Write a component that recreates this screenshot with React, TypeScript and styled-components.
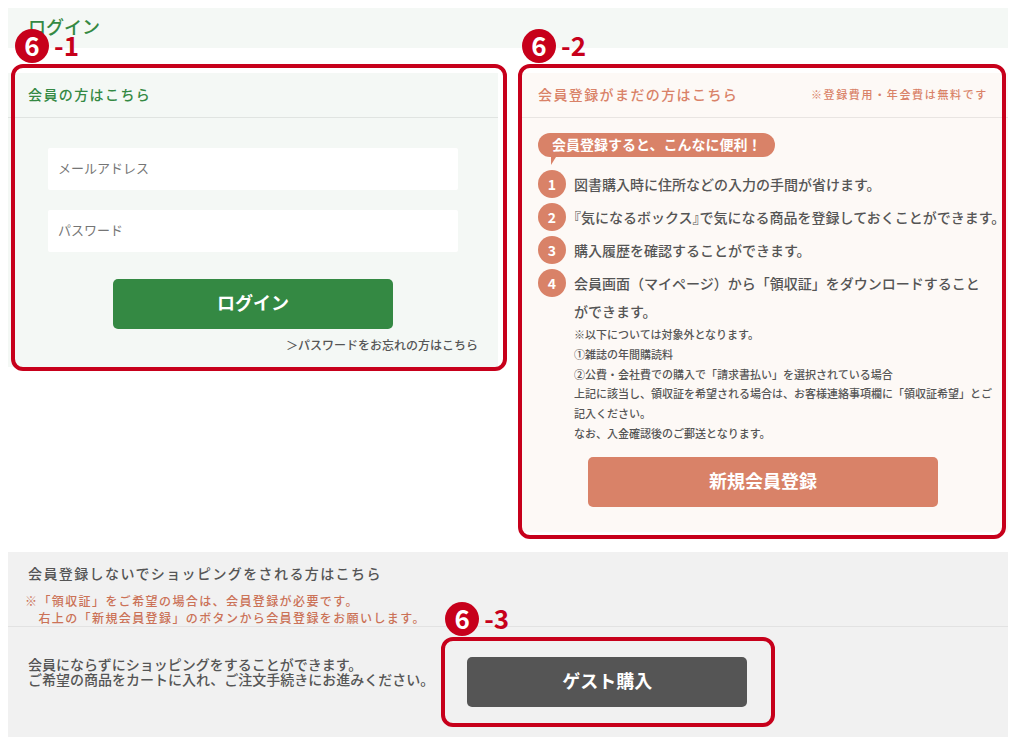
import React from "react";
import styled, { createGlobalStyle } from "styled-components";

const green = "#348943";
const orange = "#d98268";
const red = "#c7001b";
const ink = "#555555";

const GlobalStyle = createGlobalStyle`
  *, *::before, *::after { box-sizing: border-box; }
  body {
    margin: 0;
    background: #fff;
    color: ${ink};
    font-family: "Noto Sans CJK JP", sans-serif;
    font-size: 14px;
    font-weight: 500;
  }
  h1, h2, p, ol { margin: 0; padding: 0; }
`;

const Page = styled.main`
  padding: 8px 7px 6px 8px;
`;

const TitleBar = styled.header`
  padding: 0 20px 4px;
  background: #f4f8f5;
`;

const Title = styled.h1`
  color: ${green};
  font-size: 18px;
  font-weight: 500;
  line-height: 36px;
`;

const Columns = styled.div`
  display: grid;
  grid-template-columns: repeat(2, minmax(0, 1fr));
  align-items: start;
  gap: 20px;
  margin: 25px 0 20px;
`;

const Panel = styled.section<{ $bg: string }>`
  position: relative;
  background: ${(p) => p.$bg};
`;

const PanelHead = styled.div`
  display: flex;
  align-items: center;
  justify-content: space-between;
  padding: 0 20px 2px;
  border-bottom: 1px solid rgba(0, 0, 0, 0.08);
`;

const Heading = styled.h2<{ $color: string; $line: number }>`
  color: ${(p) => p.$color};
  font-size: 14px;
  font-weight: 500;
  letter-spacing: 0.1em;
  line-height: ${(p) => p.$line}px;
`;

const FreeNote = styled.p`
  color: ${orange};
  font-size: 11px;
  letter-spacing: 0.15em;
`;

const LoginForm = styled.form`
  display: flex;
  flex-direction: column;
  gap: 20px;
  padding: 30px 40px 0;
`;

const Field = styled.input`
  width: 100%;
  height: 42px;
  padding: 0 10px 3px;
  border: 0;
  border-radius: 2px;
  background: #fff;
  color: ${ink};
  font-family: inherit;
  font-size: 13px;

  &::placeholder {
    color: #757575;
    opacity: 1;
  }
`;

const Button = styled.button<{ $bg: string; $width: number }>`
  display: block;
  width: 100%;
  max-width: ${(p) => p.$width}px;
  height: 50px;
  margin: 0 auto;
  padding: 0 0 4px;
  border: 0;
  border-radius: 5px;
  background: ${(p) => p.$bg};
  color: #fff;
  font-family: inherit;
  font-size: 18px;
  font-weight: 700;
  line-height: 28px;
  cursor: pointer;
`;

const LoginAction = styled.div`
  padding-top: 7px;
`;

const Forgot = styled.p`
  padding: 6px 20px 12px;
  font-size: 12px;
  line-height: 20px;
  text-align: right;

  a {
    color: inherit;
    text-decoration: none;
  }
`;

const Benefits = styled.div`
  padding: 15px 20px 25px;
`;

const Balloon = styled.p`
  position: relative;
  width: fit-content;
  padding: 0 14px 2px;
  border-radius: 12px;
  background: ${orange};
  color: #fff;
  font-weight: 700;
  line-height: 22px;

  &::after {
    content: "";
    position: absolute;
    top: 100%;
    left: 13px;
    border-top: 8px solid ${orange};
    border-right: 5px solid transparent;
  }
`;

const BenefitList = styled.ol`
  display: flex;
  flex-direction: column;
  gap: 5px;
  && {
    margin: 13px -5px 13px 0;
  }
  list-style: none;
`;

const Benefit = styled.li`
  display: flex;
  align-items: flex-start;
  gap: 8px;
  line-height: 28px;
`;

const Num = styled.span`
  flex: none;
  width: 28px;
  height: 28px;
  border-radius: 50%;
  background: ${orange};
  color: #fff;
  font-weight: 700;
  text-align: center;
`;

const SingleLine = styled.p`
  font-feature-settings: "halt";
  white-space: nowrap;
`;

const Conditions = styled.p`
  font-size: 11px;
  line-height: 1.8;
`;

const GuestHead = styled.div`
  padding: 11px 17px 0;
  border-bottom: 1px solid rgba(0, 0, 0, 0.06);

  h2 {
    padding-left: 3px;
  }
`;

const GuestNote = styled.div`
  margin-top: 8px;
  color: #cb7257;
  letter-spacing: 0.1em;

  p {
    font-size: 12px;
    line-height: 17px;
  }
`;

const GuestBody = styled.div`
  display: flex;
  align-items: flex-start;
  gap: 33px;
  padding: 30px 20px;
`;

const GuestText = styled.p`
  line-height: 15px;
`;

const GuestAction = styled.div`
  position: relative;
  flex: 0 1 280px;
`;

const Frame = styled.div<{ $inset: string }>`
  position: absolute;
  inset: ${(p) => p.$inset};
  z-index: 1;
  border: 4px solid ${red};
  border-radius: 12px;
  pointer-events: none;
`;

const Tag = styled.div`
  position: absolute;
  bottom: 100%;
  left: 0;
  display: flex;
  align-items: flex-start;
  gap: 5px;
  padding-bottom: 5px;
  color: ${red};
  font-size: 26px;
  font-weight: 700;
  line-height: 32px;
`;

const TagDisc = styled.span`
  width: 34px;
  height: 34px;
  border-radius: 50%;
  background: ${red};
  color: #fff;
  text-align: center;
`;

function Callout({ inset, step }: { inset: string; step: number }) {
  return (
    <Frame $inset={inset}>
      <Tag>
        <TagDisc>6</TagDisc>
        <span>-{step}</span>
      </Tag>
    </Frame>
  );
}

export default function App() {
  return (
    <>
      <GlobalStyle />
      <Page>
        <TitleBar>
          <Title>ログイン</Title>
        </TitleBar>

        <Columns>
          <Panel $bg="#f4f8f5">
            <PanelHead>
              <Heading $color={green} $line={42}>会員の方はこちら</Heading>
            </PanelHead>
            <LoginForm onSubmit={(e) => e.preventDefault()}>
              <Field type="email" placeholder="メールアドレス" aria-label="メールアドレス" />
              <Field type="password" placeholder="パスワード" aria-label="パスワード" />
              <LoginAction>
                <Button type="submit" $bg={green} $width={280}>ログイン</Button>
              </LoginAction>
            </LoginForm>
            <Forgot>
              <a href="#forgot">＞パスワードをお忘れの方はこちら</a>
            </Forgot>
            <Callout inset="-9px -9px -4px 3px" step={1} />
          </Panel>

          <Panel $bg="#fdf9f6">
            <PanelHead>
              <Heading $color={orange} $line={42}>会員登録がまだの方はこちら</Heading>
              <FreeNote>※登録費用・年会費は無料です</FreeNote>
            </PanelHead>
            <Benefits>
              <Balloon>会員登録すると、こんなに便利！</Balloon>
              <BenefitList>
                <Benefit>
                  <Num>1</Num>
                  <p>図書購入時に住所などの入力の手間が省けます。</p>
                </Benefit>
                <Benefit>
                  <Num>2</Num>
                  <SingleLine>『気になるボックス』で気になる商品を登録しておくことができます。</SingleLine>
                </Benefit>
                <Benefit>
                  <Num>3</Num>
                  <p>購入履歴を確認することができます。</p>
                </Benefit>
                <Benefit>
                  <Num>4</Num>
                  <div>
                    <p>会員画面（マイページ）から「領収証」をダウンロードすることができます。</p>
                    <Conditions>
                      ※以下については対象外となります。
                      <br />
                      ①雑誌の年間購読料
                      <br />
                      ②公費・会社費での購入で「請求書払い」を選択されている場合
                      <br />
                      上記に該当し、領収証を希望される場合は、お客様連絡事項欄に「領収証希望」とご記入ください。
                      <br />
                      なお、入金確認後のご郵送となります。
                    </Conditions>
                  </div>
                </Benefit>
              </BenefitList>
              <Button type="button" $bg={orange} $width={350}>新規会員登録</Button>
            </Benefits>
            <Callout inset="-9px 2px -7px 0" step={2} />
          </Panel>
        </Columns>

        <Panel $bg="#f1f1f1">
          <GuestHead>
            <Heading $color={ink} $line={21}>会員登録しないでショッピングをされる方はこちら</Heading>
            <GuestNote>
              <p>※「領収証」をご希望の場合は、会員登録が必要です。</p>
              <p>　右上の「新規会員登録」のボタンから会員登録をお願いします。</p>
            </GuestNote>
          </GuestHead>
          <GuestBody>
            <GuestText>
              会員にならずにショッピングをすることができます。
              <br />
              ご希望の商品をカートに入れ、ご注文手続きにお進みください。
            </GuestText>
            <GuestAction>
              <Button type="button" $bg={ink} $width={280}>ゲスト購入</Button>
              <Callout inset="-20px -28px -20px -26px" step={3} />
            </GuestAction>
          </GuestBody>
        </Panel>
      </Page>
    </>
  );
}
